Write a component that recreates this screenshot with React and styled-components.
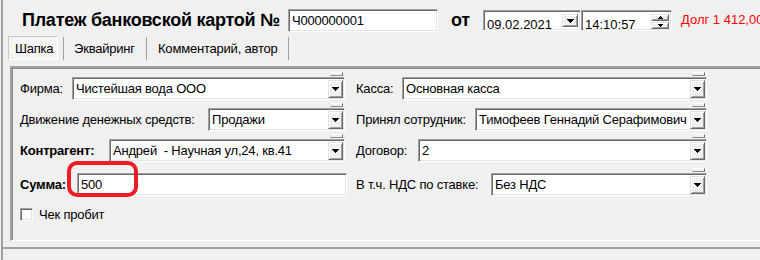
import React from "react";
import styled, { createGlobalStyle, css } from "styled-components";

const Global = createGlobalStyle`
  html, body { margin: 0; padding: 0; background: #f0f0f0; }
  body {
    font-family: "Liberation Sans", Arial, sans-serif;
    font-size: 13px;
    letter-spacing: -0.2px;
    color: #000;
  }
`;

const sunken = css`
  box-sizing: border-box;
  border: 1px solid;
  border-color: #a0a0a0 #ffffff #ffffff #a0a0a0;
  box-shadow: inset 1px 1px 0 #696969, inset -1px -1px 0 #e3e3e3;
  background: #fff;
`;

const raised = css`
  box-sizing: border-box;
  border: 1px solid;
  border-color: #e3e3e3 #696969 #696969 #e3e3e3;
  box-shadow: inset 1px 1px 0 #ffffff, inset -1px -1px 0 #a0a0a0;
  background: #f0f0f0;
`;

const Window = styled.div`
  width: 759px;
  height: 260px;
  margin-left: 1px;
  box-sizing: border-box;
  border-left: 2px solid #a0a0a0;
  overflow: hidden;
  display: flex;
  flex-direction: column;
  background: #f0f0f0;
`;

const Header = styled.div`
  height: 36px;
  box-sizing: border-box;
  padding: 9px 0 0 19px;
  display: flex;
  align-items: flex-start;
  white-space: nowrap;
`;

const Title = styled.div`
  font-size: 18px;
  font-weight: bold;
  letter-spacing: -0.25px;
  line-height: 23px;
  width: ${(p) => p.$w}px;
  margin-left: ${(p) => p.$ml || 0}px;
  flex: none;
`;

const TextBox = styled.div`
  ${sunken};
  width: ${(p) => p.$w}px;
  height: ${(p) => p.$h || 23}px;
  flex: none;
  display: flex;
  align-items: center;
  padding: 0 2px 0 3px;
  line-height: 15px;
  overflow: hidden;
`;

const HeadBox = styled.div`
  ${sunken};
  width: ${(p) => p.$w}px;
  height: 21px;
  margin-top: 1px;
  flex: none;
  display: flex;
  align-items: stretch;
  padding: 2px 2px 1px 3px;
`;

const HeadValue = styled.span`
  flex: 1;
  font-size: 13px;
  letter-spacing: 0;
  line-height: 19px;
  padding-top: 2px;
`;

const SmallBtn = styled.div`
  ${raised};
  width: 16px;
  height: 13px;
  display: flex;
  align-items: center;
  justify-content: center;
  margin-top: 1px;
`;

const Spinner = styled.div`
  width: 18px;
  display: flex;
  flex-direction: column;
  gap: 1px;
  margin-top: 1px;
`;

const SpinHalf = styled.div`
  ${raised};
  height: 7px;
  display: flex;
  align-items: center;
  justify-content: center;
`;

const Debt = styled.div`
  color: #ff0000;
  font-size: 13px;
  letter-spacing: 0;
  line-height: 15px;
  margin: 3px 0 0 9px;
`;

const TabBar = styled.div`
  height: 24px;
  display: flex;
  padding-left: 5px;
`;

const TabSlot = styled.div`
  display: flex;
  align-items: stretch;
  width: ${(p) => p.$w}px;
  box-sizing: border-box;
  border-right: 1px solid #a0a0a0;
  margin-top: 1px;
`;

const Tab = styled.div`
  box-sizing: border-box;
  display: flex;
  align-items: center;
  line-height: 15px;
  padding-left: ${(p) => p.$pl}px;
  margin-top: -1px;
  ${(p) =>
    p.$active &&
    css`
      width: 50px;
      border: 1px solid;
      border-color: #c8c8c8 #ffffff #ffffff #c8c8c8;
      background-color: #f7f7f7;
      background-image: repeating-conic-gradient(#ffffff 0 25%, #ececec 0 50%);
      background-size: 2px 2px;
    `}
`;

const Panel = styled.div`
  margin: 6px 0 0 7px;
  height: 175px;
  box-sizing: border-box;
  border-top: 2px solid #a0a0a0;
  border-left: 2px solid #a0a0a0;
  border-bottom: 1px solid #ffffff;
  box-shadow: inset 1px 1px 0 #8a8a8a;
  padding: 4px 0 0 8px;
`;

const Grid = styled.div`
  display: grid;
  grid-template-columns: 325px 351px;
  column-gap: 11px;
  row-gap: 3px;
`;

const Row = styled.div`
  display: flex;
  align-items: flex-end;
  margin-top: ${(p) => p.$mt || 0}px;
  position: relative;
`;

const Label = styled.div`
  width: ${(p) => p.$w}px;
  flex: none;
  height: 23px;
  line-height: 23px;
  font-weight: ${(p) => (p.$bold ? "bold" : "normal")};
  white-space: nowrap;
  overflow: visible;
`;

const Field = styled.div`
  flex: 1;
  min-width: 0;
  display: flex;
  flex-direction: column;
`;

const Grip = styled.div`
  align-self: flex-end;
  width: 13px;
  height: 4px;
  margin: 0 2px 1px 0;
  box-sizing: border-box;
  background: #f0f0f0;
  border-top: 1px solid #ffffff;
  border-bottom: 1px solid #8a8a8a;
  border-right: 1px solid #696969;
  border-left: 1px solid #e3e3e3;
`;

const ComboBox = styled.div`
  ${sunken};
  height: 23px;
  display: flex;
  align-items: stretch;
  padding: 2px 1px 1px 2px;
`;

const ComboValue = styled.div`
  flex: 1;
  min-width: 0;
  padding-left: 1px;
  line-height: 18px;
  white-space: pre;
  overflow: hidden;
`;

const DropBtn = styled.div`
  ${raised};
  width: 15px;
  display: flex;
  align-items: center;
  justify-content: center;
`;

const SumBox = styled.div`
  ${sunken};
  flex: 1;
  height: 23px;
  margin-right: -2px;
  padding: 0 3px;
  line-height: 21px;
`;

const Highlight = styled.div`
  position: absolute;
  left: 47px;
  top: -7px;
  width: 71px;
  height: 36px;
  box-sizing: border-box;
  border: 4px solid #ec1c24;
  border-radius: 10px;
  pointer-events: none;
`;

const CheckRow = styled.div`
  display: flex;
  align-items: center;
  gap: 6px;
  margin-top: 11px;
  line-height: 15px;
`;

const CheckBox = styled.div`
  ${sunken};
  width: 13px;
  height: 13px;
`;

const Footer = styled.div`
  margin-top: 6px;
  border-top: 2px solid #a0a0a0;
`;

const Arrow = () => (
  <svg width="7" height="4" viewBox="0 0 7 4" shapeRendering="crispEdges">
    <path d="M0 0h7v1H0zM1 1h5v1H1zM2 2h3v1H2zM3 3h1v1H3z" fill="#000" />
  </svg>
);

const SmallArrow = ({ up }) => (
  <svg width="5" height="3" viewBox="0 0 5 3" shapeRendering="crispEdges">
    {up ? (
      <path d="M2 0h1v1H2zM1 1h3v1H1zM0 2h5v1H0z" fill="#000" />
    ) : (
      <path d="M0 0h5v1H0zM1 1h3v1H1zM2 2h1v1H2z" fill="#000" />
    )}
  </svg>
);

const Combo = ({ value }) => (
  <Field>
    <Grip />
    <ComboBox>
      <ComboValue>{value}</ComboValue>
      <DropBtn>
        <Arrow />
      </DropBtn>
    </ComboBox>
  </Field>
);

export default function App() {
  return (
    <>
      <Global />
      <Window>
        <Header>
          <Title $w={266}>Платеж банковской картой №</Title>
          <TextBox $w={150}>Ч000000001</TextBox>
          <Title $w={32} $ml={13}>от</Title>
          <HeadBox $w={98}>
            <HeadValue>09.02.2021</HeadValue>
            <SmallBtn>
              <Arrow />
            </SmallBtn>
          </HeadBox>
          <HeadBox $w={91}>
            <HeadValue>14:10:57</HeadValue>
            <Spinner>
              <SpinHalf>
                <SmallArrow up />
              </SpinHalf>
              <SpinHalf>
                <SmallArrow />
              </SpinHalf>
            </Spinner>
          </HeadBox>
          <Debt>Долг 1 412,00</Debt>
        </Header>

        <TabBar>
          <TabSlot $w={56}>
            <Tab $active $pl={6}>Шапка</Tab>
          </TabSlot>
          <TabSlot $w={83}>
            <Tab $pl={10}>Эквайринг</Tab>
          </TabSlot>
          <TabSlot $w={142}>
            <Tab $pl={11}>Комментарий, автор</Tab>
          </TabSlot>
        </TabBar>

        <Panel>
          <Grid>
            <Row>
              <Label $w={52}>Фирма:</Label>
              <Combo value="Чистейшая вода ООО" />
            </Row>
            <Row>
              <Label $w={46}>Касса:</Label>
              <Combo value="Основная касса" />
            </Row>
            <Row>
              <Label $w={188}>Движение денежных средств:</Label>
              <Combo value="Продажи" />
            </Row>
            <Row>
              <Label $w={119}>Принял сотрудник:</Label>
              <Combo value="Тимофеев Геннадий Серафимович" />
            </Row>
            <Row>
              <Label $w={89} $bold>Контрагент:</Label>
              <Combo value="Андрей  - Научная ул,24, кв.41" />
            </Row>
            <Row>
              <Label $w={62}>Договор:</Label>
              <Combo value="2" />
            </Row>
            <Row $mt={3}>
              <Label $w={57} $bold>Сумма:</Label>
              <SumBox>500</SumBox>
              <Highlight />
            </Row>
            <Row $mt={3}>
              <Label $w={135}>В т.ч. НДС по ставке:</Label>
              <Combo value="Без НДС" />
            </Row>
          </Grid>
          <CheckRow>
            <CheckBox />
            <span>Чек пробит</span>
          </CheckRow>
        </Panel>
        <Footer />
      </Window>
    </>
  );
}
